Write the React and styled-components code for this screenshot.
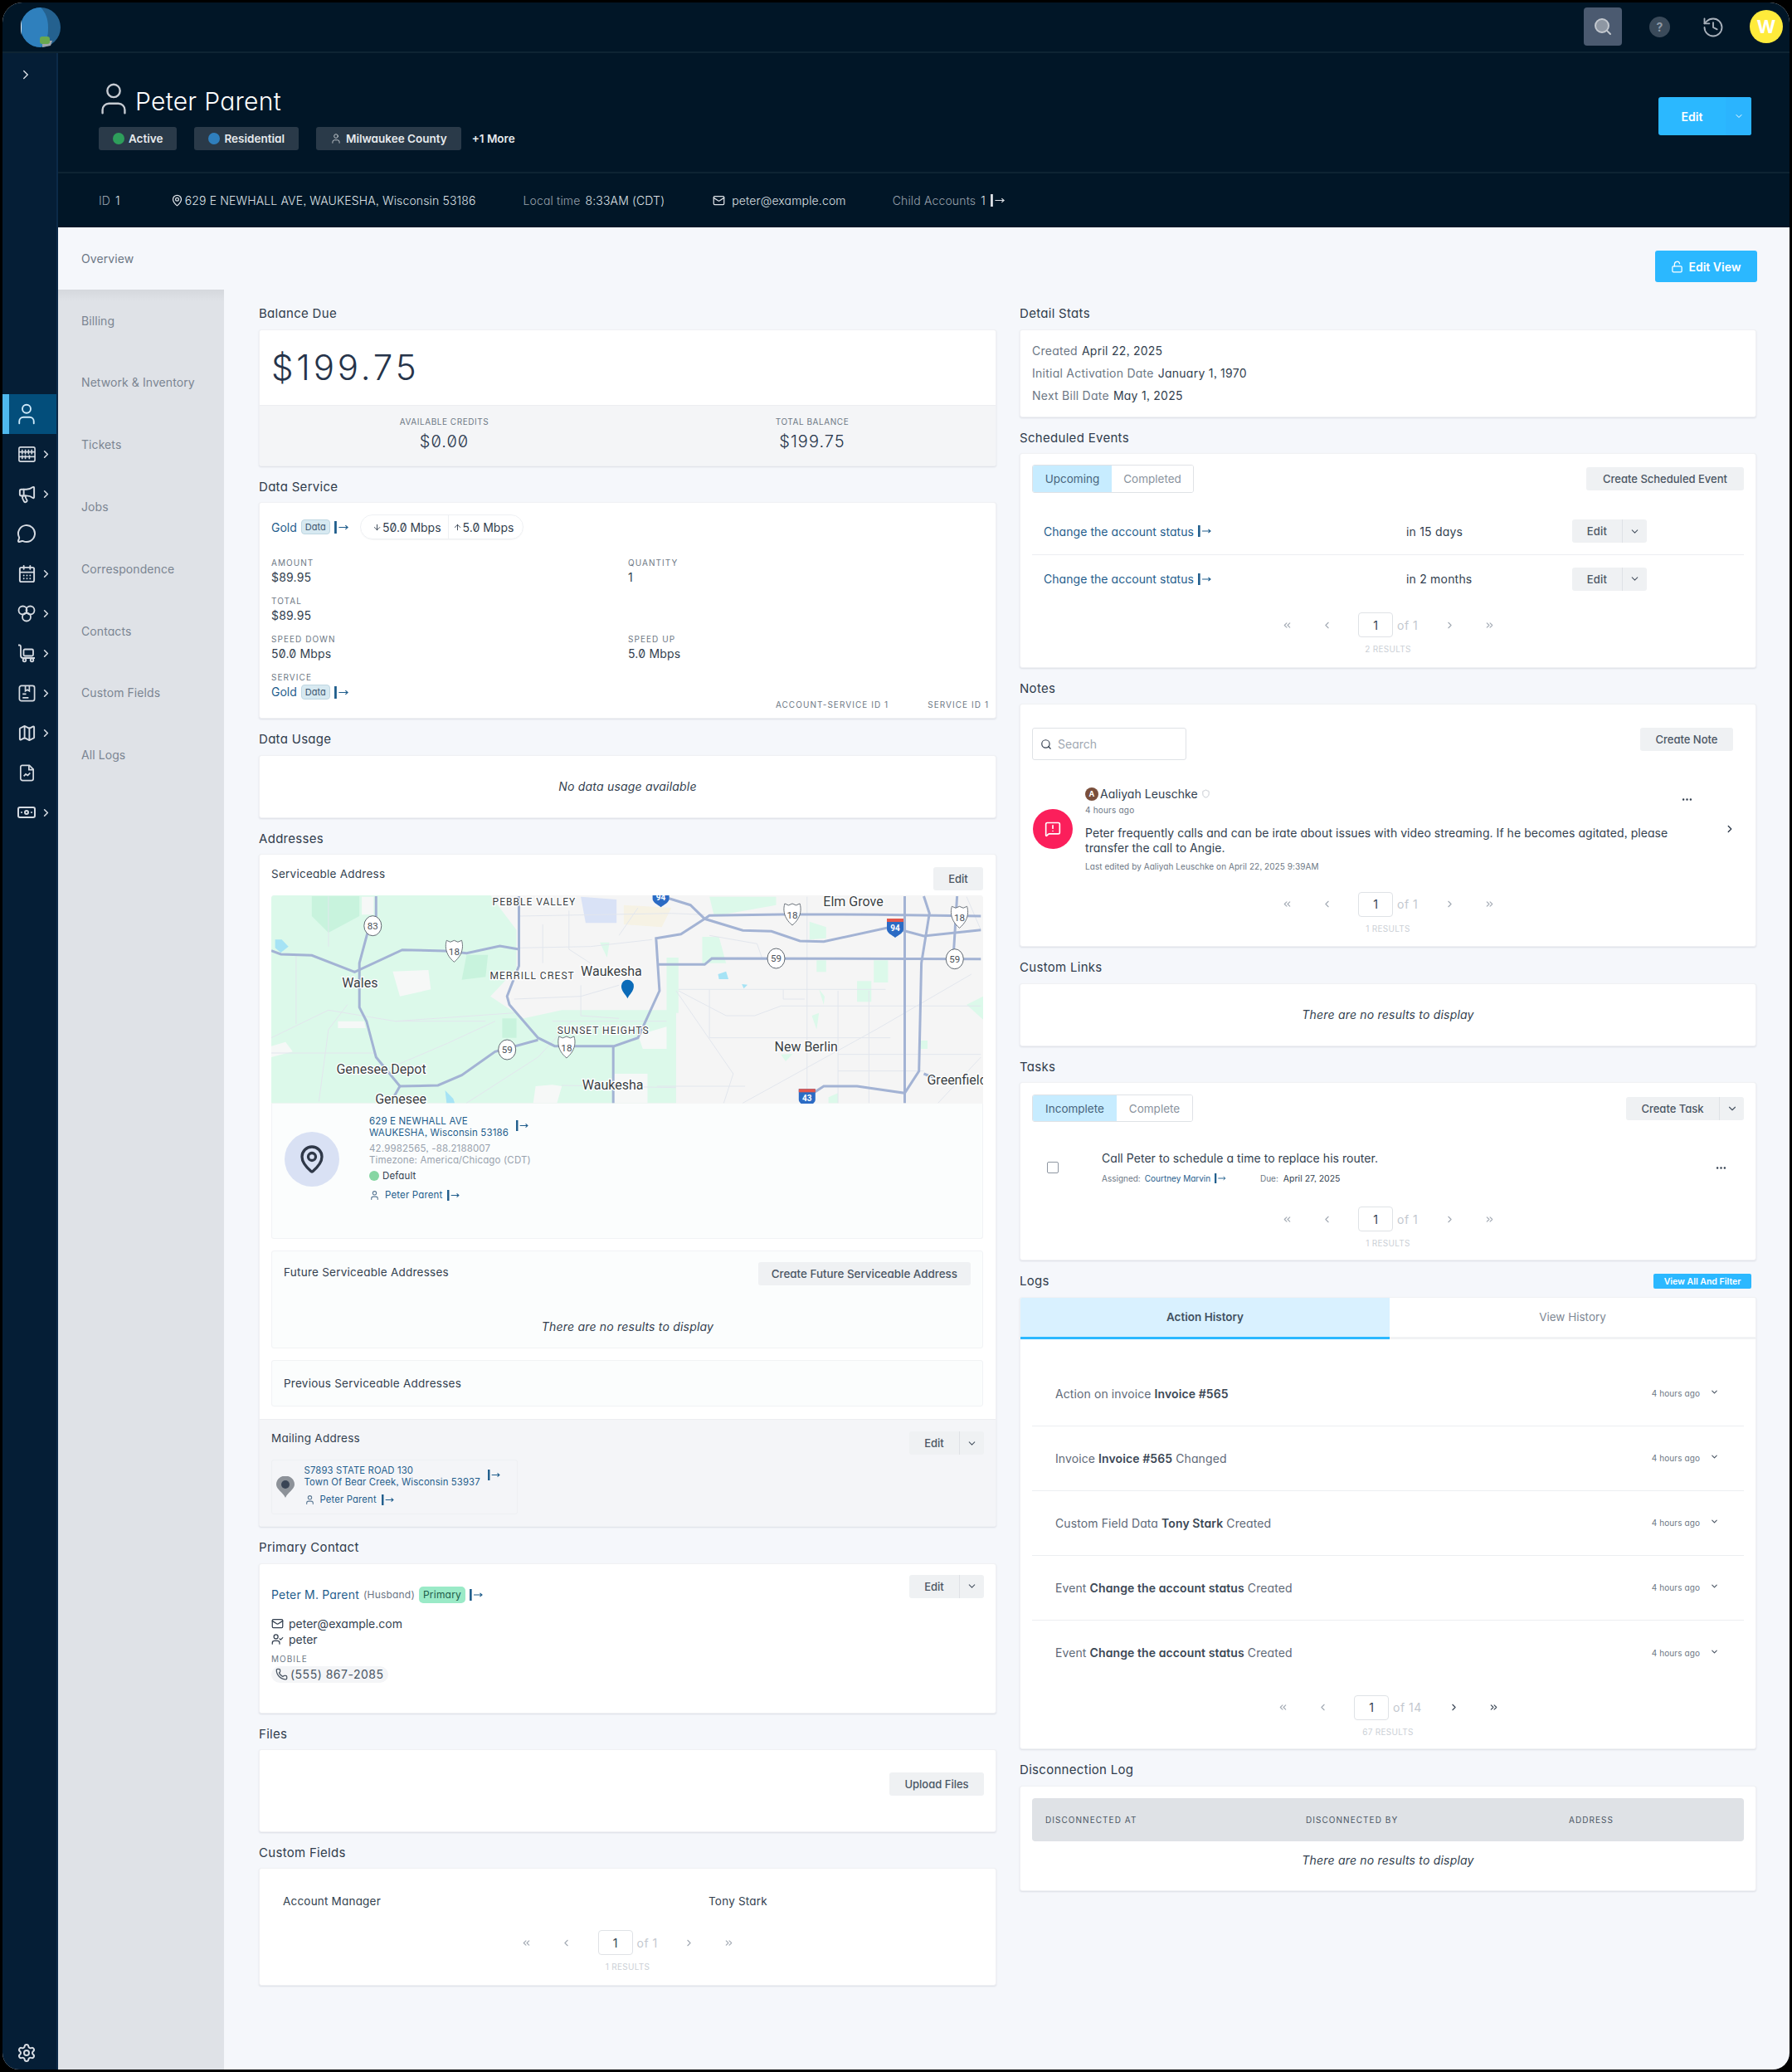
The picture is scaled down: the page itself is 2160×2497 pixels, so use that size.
import React from 'react';
import styled, { createGlobalStyle } from 'styled-components';
import {
  User, Megaphone, MessageCircle, CalendarDays, Map as MapIcon, Banknote, Settings, History, Search,
  LockOpen, MapPin, Mail, ChevronRight, ChevronDown, ChevronLeft, ChevronsLeft, ChevronsRight,
  Ellipsis, UserCheck, Phone, MessageSquareWarning, ArrowDown, ArrowUp, Shield,
} from 'lucide-react';

const GlobalStyle = createGlobalStyle`
  html, body { margin: 0; padding: 0; background: #000; }
  body {
    font-family: Inter, "Liberation Sans", sans-serif;
    font-feature-settings: "cv11", "ss03";
    color: #333f4f;
    font-size: 13px;
  }
  * { box-sizing: border-box; }
`;

const Shell = styled.div`
  width: 2160px;
  height: 2497px;
  padding: 3px;
  background: #000;
`;
const Frame = styled.div`
  height: 100%;
  display: flex;
  flex-direction: column;
  border-radius: 24px 24px 20px 20px;
  overflow: hidden;
  background: #f5f7fb;
`;

/* top bar */
const TopBar = styled.header`
  height: 61px;
  flex: none;
  display: flex;
  align-items: center;
  padding: 0 8px 0 22px;
  background: #011627;
  border-bottom: 2px solid #0e2433;
`;
const TopActions = styled.div`
  margin-left: auto;
  display: flex;
  align-items: center;
`;
const SearchBox = styled.div`
  width: 46px;
  height: 46px;
  margin-top: -2px;
  border-radius: 4px;
  background: #4b5a70;
  color: #c3c8cf;
  display: flex;
  align-items: center;
  justify-content: center;
`;
const HelpDot = styled.div`
  width: 25px;
  height: 25px;
  margin-left: 33px;
  border-radius: 50%;
  background: #3a4a5a;
  color: #8e99a6;
  font-size: 14px;
  font-weight: 700;
  display: flex;
  align-items: center;
  justify-content: center;
`;
const HistoryWrap = styled.div`
  margin-left: 38px;
  color: #a9b1bb;
  display: flex;
`;
const Avatar = styled.div`
  width: 40px;
  height: 40px;
  margin-left: 30px;
  margin-top: -2px;
  border-radius: 50%;
  background: #ffeb3b;
  color: #fff;
  font-size: 22px;
  font-weight: 700;
  display: flex;
  align-items: center;
  justify-content: center;
`;

const Body = styled.div`
  flex: 1;
  display: flex;
  min-height: 0;
`;

/* icon rail */
const Rail = styled.nav`
  width: 67px;
  flex: none;
  display: flex;
  flex-direction: column;
  background: #051e36;
  border-right: 2px solid #0c2a48;
  color: #d5dae1;
`;
const RailToggle = styled.div`
  height: 52px;
  padding-left: 19px;
  display: flex;
  align-items: center;
`;
const RailList = styled.div`
  margin-top: 359px;
  display: flex;
  flex-direction: column;
`;
const RailItem = styled.div`
  height: 48px;
  display: flex;
  align-items: center;
  padding-left: ${p => (p.$active ? '9px' : '17px')};
  background: ${p => (p.$active ? '#034e7b' : 'transparent')};
  border-left: ${p => (p.$active ? '8px solid #4fb8ed' : '0')};
  color: ${p => (p.$active ? '#cfeafa' : 'inherit')};
`;
const RailGlyph = styled.span`
  width: 24px;
  display: flex;
  justify-content: center;
  svg { flex: none; }
`;
const RailCaret = styled.span`
  margin-left: 4px;
  display: flex;
`;
const RailGear = styled.div`
  margin-top: auto;
  padding: 0 0 8px 17px;
`;

const Right = styled.div`
  flex: 1;
  min-width: 0;
  display: flex;
  flex-direction: column;
`;

/* account header */
const AccountHead = styled.div`
  height: 145px;
  flex: none;
  display: flex;
  justify-content: space-between;
  padding: 40px 46px 0 49px;
  background: #011627;
  border-bottom: 2px solid #0e2433;
`;
const NameRow = styled.div`
  height: 36px;
  display: flex;
  align-items: center;
  gap: 2.700px;
  color: #fff;
  font-size: 30px;
  font-weight: 300;
  letter-spacing: .3px;
  svg { color: #c6cbd2; margin: -6px 0 0 -4.700px; flex: none; }
`;
const BadgeRow = styled.div`
  margin-top: 12.500px;
  display: flex;
  align-items: center;
  gap: 21px;
`;
const HeadBadge = styled.div`
  height: 28px;
  padding: 0 17px;
  display: flex;
  align-items: center;
  gap: 5px;
  border-radius: 3px;
  background: #2a3a49;
  color: #e8ebee;
  font-size: 13.500px;
  font-weight: 600;
  svg { margin: 0; }
`;
const Dot = styled.span`
  width: ${p => p.$size || 14}px;
  height: ${p => p.$size || 14}px;
  border-radius: 50%;
  background: ${p => p.$color};
  flex: none;
`;
const MoreTag = styled.span`
  margin-left: -8px;
  color: #e8ebee;
  font-size: 13.500px;
  font-weight: 600;
`;
const PrimarySplit = styled.div`
  display: flex;
  height: 46px;
  margin-top: 13px;
  border-radius: 3px;
  overflow: hidden;
  background: #2bb8ff;
  color: #fff;
  font-size: 14px;
  font-weight: 600;
`;
const PrimaryLabel = styled.div`
  width: 81px;
  display: flex;
  align-items: center;
  justify-content: center;
`;
const PrimaryCaret = styled.div`
  width: 31px;
  background: #2bb4fe;
  display: flex;
  align-items: center;
  justify-content: center;
`;

const InfoStrip = styled.div`
  height: 65px;
  flex: none;
  display: flex;
  align-items: center;
  padding-left: 49px;
  background: #011627;
  color: #dde1e6;
  font-size: 14px;
  font-weight: 300;
  letter-spacing: .15px;
`;
const InfoItem = styled.span`
  display: flex;
  align-items: center;
  gap: ${p => p.$gap || 6}px;
  margin-left: ${p => p.$left || 0}px;
`;
const InfoLabel = styled.span`
  color: #98a2ad;
`;

/* content */
const Content = styled.div`
  flex: 1;
  display: flex;
  min-height: 0;
`;
const SubNav = styled.div`
  width: 200px;
  flex: none;
  background: #dfe2e7;
`;
const SubNavItem = styled.div`
  height: 74.800px;
  padding-left: 28px;
  display: flex;
  align-items: center;
  background: ${p => (p.$active ? '#f5f7fb' : 'transparent')};
  color: ${p => (p.$active ? '#6b7684' : '#7b8592')};
  font-size: 14px;
  letter-spacing: .08px;
  &:nth-child(2) { background: linear-gradient(#d5d8dd, #dfe2e7 14px); }
`;
const Main = styled.main`
  flex: 1;
  min-width: 0;
  padding: 28px 40px 0 42px;
`;
const MainTop = styled.div`
  height: 38px;
  margin: 0 -1px 29px 0;
  display: flex;
  justify-content: flex-end;
`;
const EditViewButton = styled.div`
  width: 123px;
  height: 38px;
  display: flex;
  align-items: center;
  justify-content: center;
  gap: 6px;
  border-radius: 3px;
  background: #2bb8ff;
  color: #fff;
  font-size: 14px;
  font-weight: 600;
`;
const Columns = styled.div`
  display: grid;
  grid-template-columns: 889px 888px;
  gap: 28px;
  align-items: start;
`;
const Column = styled.div`
  display: flex;
  flex-direction: column;
  gap: 16px;
`;
const Section = styled.section``;
const TitleRow = styled.div`
  height: 18px;
  margin-bottom: 9.500px;
  display: flex;
  align-items: center;
  justify-content: space-between;
`;
const Title = styled.h3`
  margin: 0;
  font-size: 15px;
  font-weight: 400;
  line-height: 18px;
  letter-spacing: .3px;
  color: #303c4c;
`;
const Card = styled.div`
  background: #fff;
  border-radius: 3px;
  border: 1px solid #f0f1f4;
  box-shadow: 0 1px 2px rgba(40, 50, 70, .12);
  height: ${p => (p.$h ? `${p.$h}px` : 'auto')};
  padding: ${p => p.$pad || '0'};
  overflow: hidden;
`;
const Empty = styled.div`
  text-align: center;
  font-style: italic;
  font-size: 14px;
  color: #333f4f;
  letter-spacing: .2px;
`;
const CenteredEmpty = styled(Empty)`
  height: 100%;
  display: flex;
  align-items: center;
  justify-content: center;
`;

/* balance */
const BalanceTop = styled.div`
  height: 90px;
  padding-left: 14px;
  display: flex;
  align-items: center;
  font-size: 42px;
  font-weight: 300;
  letter-spacing: 3.800px;
  color: #26344a;
`;
const BalanceFoot = styled.div`
  height: 73px;
  display: grid;
  grid-template-columns: 445px 1fr;
  background: #f4f5f7;
  border-top: 1px solid #eceef1;
`;
const BalanceCell = styled.div`
  text-align: center;
  padding-top: 13px;
`;
const Caps = styled.div`
  margin-top: ${p => p.$top || 0}px;
  font-size: 10px;
  line-height: 12px;
  letter-spacing: ${p => p.$sp || 1.050}px;
  text-transform: uppercase;
  color: ${p => p.$color || '#6d7885'};
`;
const BalanceValue = styled.div`
  margin-top: 5px;
  font-size: 20px;
  line-height: 26px;
  font-weight: 300;
  letter-spacing: 1px;
  color: #26344a;
  font-feature-settings: "cv11", "zero";
`;

/* data service */
const ServiceHead = styled.div`
  height: 30px;
  display: flex;
  align-items: center;
`;
const LinkRow = styled.span`
  display: inline-flex;
  align-items: center;
  gap: ${p => p.$gap || 5}px;
  color: #1f5d8c;
  font-size: ${p => p.$size || 14}px;
  letter-spacing: ${p => p.$sp || 0}px;
`;
const TypeTag = styled.span`
  padding: 0 4px;
  height: 18px;
  display: inline-flex;
  align-items: center;
  border-radius: 4px;
  background: #d7e9f1;
  border: 1px solid #bfd7e2;
  color: #3d566e;
  font-size: 11px;
`;
const SpeedPill = styled.div`
  margin-left: 14px;
  height: 30px;
  display: flex;
  align-items: center;
  border: 1px solid #eef0f3;
  border-radius: 15px;
  box-shadow: 0 1px 1px rgba(0, 0, 0, .04);
  font-size: 14px;
  color: #333f4f;
  font-feature-settings: "cv11", "zero";
`;
const SpeedPart = styled.span`
  height: 100%;
  padding: 0 ${p => (p.$first ? 8 : 11)}px 0 ${p => (p.$first ? 14 : 5)}px;
  display: flex;
  align-items: center;
  gap: 1px;
  border-left: ${p => (p.$first ? '0' : '1px solid #eef0f3')};
`;
const FieldGrid = styled.div`
  margin-top: 22px;
  display: grid;
  grid-template-columns: 430px 1fr;
  grid-auto-rows: 46px;
`;
const Field = styled.div``;
const FieldValue = styled.div`
  margin-top: 3px;
  font-size: 14px;
  line-height: 18px;
  color: #333f4f;
  letter-spacing: .2px;
  font-feature-settings: "cv11", "zero";
`;
const ServiceIds = styled.div`
  align-self: end;
  margin-bottom: 1px;
  padding-right: 8px;
  display: flex;
  justify-content: flex-end;
  gap: 47px;
`;

/* addresses */
const AddressTop = styled.div`
  padding: 15px 15px 15px 14px;
`;
const RowBetween = styled.div`
  display: flex;
  justify-content: space-between;
  align-items: ${p => p.$align || 'center'};
`;
const SubTitle = styled.div`
  font-size: 13.500px;
  line-height: 16px;
  letter-spacing: .25px;
  color: #333f4f;
  padding-top: ${p => p.$top || 0}px;
`;
const GrayButton = styled.div`
  height: 28px;
  width: ${p => (p.$w ? `${p.$w}px` : 'auto')};
  margin-top: ${p => p.$top || 0}px;
  margin-right: ${p => p.$right || 0}px;
  padding: 0 17px;
  flex: none;
  display: inline-flex;
  align-items: center;
  justify-content: center;
  border-radius: 3px;
  background: #eff1f3;
  color: #4b5664;
  font-size: 13px;
  font-weight: 500;
`;
const FutureButton = styled(GrayButton)`
  font-size: 13.400px;
  padding: 0 16px;
  margin-right: 1px;
  margin-top: -1px;
`;
const SplitButton = styled.div`
  height: 28px;
  margin-top: ${p => p.$top || 0}px;
  display: inline-flex;
  flex: none;
  border-radius: 3px;
  background: #eff1f3;
  color: #4b5664;
  font-size: 13px;
  font-weight: 500;
  overflow: hidden;
`;
const SplitLabel = styled.div`
  width: ${p => p.$w}px;
  display: flex;
  align-items: center;
  justify-content: center;
  border-right: 1px solid #dfe2e6;
`;
const SplitCaret = styled.div`
  width: ${p => p.$w || 29}px;
  display: flex;
  align-items: center;
  justify-content: center;
`;
const MapWrap = styled.div`
  margin-top: 6px;
  height: 251px;
  border-radius: 4px 4px 0 0;
  overflow: hidden;
  background: #f5f5f5;
  svg { display: block; }
`;
const AddressBox = styled.div`
  height: 163px;
  padding: 14px 0 0 15px;
  display: flex;
  background: #fbfdfd;
  border: 1px solid #f1f3f5;
  border-top: 0;
  border-radius: 0 0 3px 3px;
`;
const PinCircle = styled.div`
  width: 66px;
  height: 66px;
  margin-top: 20px;
  border-radius: 50%;
  background: #d9e1f4;
  color: #2f3848;
  display: flex;
  align-items: center;
  justify-content: center;
`;
const AddressInfo = styled.div`
  margin-left: 36px;
  font-size: 11.500px;
  line-height: 14px;
  letter-spacing: .15px;
`;
const AddressLines = styled.div`
  display: flex;
  gap: 9px;
  color: #1f5d8c;
`;
const GoOffset = styled.span`
  margin-top: ${p => p.$top ?? 6}px;
  display: flex;
`;
const GreyLines = styled.div`
  margin-top: 5px;
  color: #99a2ad;
`;
const DefaultRow = styled.div`
  margin-top: 5px;
  display: flex;
  align-items: center;
  gap: 4px;
  color: #333f4f;
`;
const OwnerRow = styled.div`
  margin-top: ${p => p.$top || 8}px;
  height: 16px;
  display: flex;
  align-items: center;
  gap: 6px;
  color: #1f5d8c;
  svg.person { color: #5d7a95; }
`;
const InsetBox = styled.div`
  margin-top: ${p => p.$top}px;
  height: ${p => p.$h}px;
  padding: ${p => p.$pad};
  background: #fbfdfd;
  border: 1px solid #f1f3f5;
  border-radius: 3px;
`;
const FutureEmpty = styled(Empty)`
  margin-top: 41px;
  line-height: 18px;
  padding-right: 0;
`;
const AddressBottom = styled.div`
  height: 129px;
  padding: 14px 14px 0 14px;
  background: #f4f5f8;
  border-top: 1px solid #eceef1;
`;
const MailBox = styled.div`
  width: 297px;
  height: 66px;
  margin-top: 6px;
  padding: 5px 0 0 5px;
  display: flex;
  gap: 11.500px;
  border: 1px solid #eef0f3;
  border-radius: 3px;
  font-size: 11.300px;
  line-height: 14px;
  letter-spacing: .15px;
`;
const MailPin = styled.div`
  margin-top: 14px;
  display: flex;
`;

/* contact */
const ContactName = styled.div`
  margin-top: 14px;
  height: 20px;
  display: flex;
  align-items: center;
  gap: 5px;
  font-size: 14px;
  color: #1f5d8c;
  letter-spacing: .2px;
`;
const Relation = styled.span`
  color: #6a7583;
  font-size: 12px;
`;
const PrimaryTag = styled.span`
  height: 20px;
  padding: 0 5px;
  display: inline-flex;
  align-items: center;
  border-radius: 5px;
  background: #9aeac7;
  color: #1d5a49;
  font-size: 12px;
`;
const ContactLine = styled.div`
  height: 19px;
  margin-top: ${p => p.$top || 0}px;
  display: flex;
  align-items: center;
  gap: 6px;
  font-size: 14px;
  color: #333f4f;
`;
const PhonePill = styled.div`
  width: 141px;
  height: 20px;
  margin-top: 3px;
  padding-left: 5px;
  display: flex;
  align-items: center;
  gap: 3px;
  border-radius: 10px;
  background: #f4f5f7;
  font-size: 14px;
  letter-spacing: .5px;
  color: #4b5664;
`;
const ActionEnd = styled.div`
  display: flex;
  justify-content: flex-end;
`;

/* custom field */
const CustomRow = styled.div`
  height: 53.500px;
  padding: 10px 0 0 28px;
  display: grid;
  grid-template-columns: 513px 1fr;
  font-size: 13.500px;
  letter-spacing: .2px;
  color: #333f4f;
`;

/* pagination */
const PagerWrap = styled.div`
  margin-top: ${p => p.$top || 0}px;
  display: flex;
  flex-direction: column;
  align-items: center;
`;
const Pager = styled.div`
  height: 30px;
  display: flex;
  align-items: center;
`;
const PagerArrow = styled.span`
  width: 48px;
  display: flex;
  justify-content: center;
  color: ${p => (p.$on ? '#3a4655' : '#a2a9b3')};
`;
const PagerBox = styled.span`
  width: 42px;
  height: 30px;
  margin-left: 14px;
  display: flex;
  align-items: center;
  justify-content: center;
  border: 1px solid #dfe2e6;
  border-radius: 4px;
  background: #fff;
  font-size: 14px;
  color: #333f4f;
`;
const PagerOf = styled.span`
  width: ${p => p.$w}px;
  padding-left: 5px;
  font-size: 14px;
  color: #c3c8cf;
  letter-spacing: .5px;
`;
const Results = styled.div`
  margin-top: 7px;
  height: 14px;
  line-height: 14px;
  font-size: 10px;
  letter-spacing: .3px;
  color: #cbd0d6;
`;

/* details */
const StatLine = styled.div`
  height: 27px;
  display: flex;
  align-items: center;
  gap: 5px;
  font-size: 14px;
  letter-spacing: .25px;
  color: #333f4f;
`;
const StatLabel = styled.span`
  color: #6d7885;
`;
const Toggle = styled.div`
  display: inline-flex;
  height: ${p => p.$h}px;
  border: 1px solid #dfe2e6;
  border-radius: 3px;
  overflow: hidden;
  font-size: 13.500px;
`;
const ToggleOption = styled.div`
  width: ${p => p.$w}px;
  display: flex;
  align-items: center;
  justify-content: center;
  background: ${p => (p.$on ? '#c7ecff' : '#fff')};
  color: ${p => (p.$on ? '#48647c' : '#8a939e')};
`;
const EventRow = styled.div`
  height: 57px;
  margin-top: ${p => p.$top || 0}px;
  padding-left: 14px;
  display: grid;
  grid-template-columns: 437px 200px 1fr;
  align-items: center;
  font-size: 14px;
  letter-spacing: .2px;
  border-bottom: ${p => (p.$line ? '1.500px solid #eceef1' : '0')};
`;
const SearchField = styled.div`
  width: 186px;
  height: 39px;
  padding-left: 9px;
  display: flex;
  align-items: center;
  gap: 7px;
  border: 1px solid #dfe2e6;
  border-radius: 3px;
  color: #333f4f;
  font-size: 14px;
  span { color: #a0a8b2; }
`;
const Note = styled.div`
  margin-top: 31.500px;
  display: flex;
  align-items: center;
  padding-left: 1px;
`;
const NoteBadge = styled.div`
  width: 48px;
  height: 48px;
  border-radius: 50%;
  flex: none;
  background: #fb1f5b;
  color: #fff;
  display: flex;
  align-items: center;
  justify-content: center;
`;
const NoteBody = styled.div`
  width: 710px;
  margin-left: 15px;
`;
const NoteAuthor = styled.div`
  height: 18px;
  display: flex;
  align-items: center;
  gap: 2px;
  font-size: 14px;
  letter-spacing: .05px;
  svg { color: #c3c8cf; margin-left: 2px; }
`;
const AuthorDot = styled.span`
  width: 16px;
  height: 16px;
  border-radius: 50%;
  background: #7a4f3c;
  color: #fff;
  font-size: 9px;
  font-weight: 700;
  display: flex;
  align-items: center;
  justify-content: center;
`;
const Tiny = styled.div`
  margin-top: ${p => p.$top}px;
  height: 12px;
  line-height: 12px;
  font-size: 10px;
  letter-spacing: ${p => p.$sp ?? .2}px;
  color: #6d7885;
`;
const NoteText = styled.div`
  margin-top: 13px;
  font-size: 14px;
  line-height: 18px;
  letter-spacing: .05px;
  color: #333f4f;
`;
const NoteMenu = styled.div`
  width: 32px;
  margin-left: -1px;
  align-self: flex-start;
  margin-top: 8px;
  display: flex;
  justify-content: center;
  color: #333f4f;
`;
const NoteOpen = styled.div`
  margin-left: 29px;
  display: flex;
  color: #333f4f;
`;
const Task = styled.div`
  margin-top: 35px;
  display: flex;
  align-items: center;
`;
const CheckBox = styled.span`
  width: 14px;
  height: 14px;
  margin-left: 18px;
  border: 1px solid #8e96a1;
  border-radius: 2px;
`;
const TaskBody = styled.div`
  margin-left: 52px;
  flex: 1;
`;
const TaskTitle = styled.div`
  font-size: 14px;
  line-height: 18px;
  letter-spacing: .05px;
`;
const TaskMeta = styled.div`
  margin-top: 8px;
  height: 14px;
  display: flex;
  align-items: center;
  font-size: 10px;
  color: #6d7885;
`;
const MetaLink = styled.span`
  margin-left: 5px;
  display: inline-flex;
  align-items: center;
  gap: 5px;
  color: #1f5d8c;
`;
const MetaDue = styled.span`
  margin-left: 41px;
`;
const MetaDate = styled.span`
  margin-left: 6px;
  color: #333f4f;
  font-size: 10.500px;
`;
const TaskMenu = styled.div`
  margin-right: 20px;
  display: flex;
  color: #333f4f;
`;
const ViewAll = styled.div`
  width: 118px;
  height: 18px;
  margin-right: 6px;
  display: flex;
  align-items: center;
  justify-content: center;
  border-radius: 2px;
  background: #2bb8ff;
  color: #fff;
  font-size: 10.500px;
  font-weight: 600;
`;
const Tabs = styled.div`
  display: grid;
  grid-template-columns: 445px 1fr;
  height: 50px;
`;
const Tab = styled.div`
  display: flex;
  align-items: center;
  justify-content: center;
  font-size: 13.500px;
  background: ${p => (p.$on ? '#d9f1ff' : '#fff')};
  color: ${p => (p.$on ? '#41505f' : '#7e8894')};
  font-weight: ${p => (p.$on ? 600 : 400)};
  border-bottom: 3px solid ${p => (p.$on ? '#2bb8ff' : '#f1f2f4')};
`;
const LogList = styled.div`
  margin: 27px 14px 0 14px;
`;
const LogRow = styled.div`
  height: 78px;
  padding: 0 30px 0 28px;
  display: flex;
  align-items: center;
  font-size: 14px;
  color: #5f6a78;
  letter-spacing: .1px;
  border-bottom: ${p => (p.$line ? '1.500px solid #eceef1' : '0')};
  b { color: #3c4856; font-weight: 600; }
`;
const LogTime = styled.span`
  margin-left: auto;
  font-size: 10px;
  color: #6d7885;
`;
const LogCaret = styled.span`
  margin-left: 12px;
  display: flex;
  color: #4b5664;
  margin-top: -3px;
`;
const TableHead = styled.div`
  height: 52px;
  padding-left: 16px;
  display: grid;
  grid-template-columns: 314px 317px 1fr;
  align-items: center;
  border-radius: 4px;
  background: #dfe2e6;
`;
const TableEmpty = styled(Empty)`
  margin-top: 14px;
  line-height: 18px;
`;

/* go-to arrow, the bar with the thin arrow that sits after every link */
const GoIcon = ({ size = 14 }) => (
  <svg width={size * 1.15} height={size} viewBox="0 0 16 14" fill="none" stroke="currentColor">
    <rect x="0" y="0" width="2.600" height="14" fill="currentColor" stroke="none" />
    <path d="M5 7h10M12.400 4.800 15 7l-2.600 2.200" strokeWidth="1.100" />
  </svg>
);

const AbacusIcon = () => (
  <svg width="23" height="23" viewBox="0 0 24 24" fill="none" stroke="currentColor" strokeWidth="1.700">
    <rect x="2" y="3" width="20" height="18" rx="2" />
    <path d="M2 9h20M2 15h20M6 6v6M10 6v6M14 6v6M18 6v6M6 13v5M10 13v5M15 13v5" />
  </svg>
);
const TrioIcon = () => (
  <svg width="24" height="24" viewBox="0 0 24 24" fill="none" stroke="currentColor" strokeWidth="1.800">
    <circle cx="7.500" cy="8.500" r="5" />
    <circle cx="16.500" cy="8.500" r="5" />
    <circle cx="12" cy="16.500" r="5" />
  </svg>
);
const CartIcon = () => (
  <svg width="24" height="24" viewBox="0 0 24 24" fill="none" stroke="currentColor" strokeWidth="1.800">
    <path d="M2 2.500h1.500Q5 2.500 5 4.500V15q0 3 3 3h14" />
    <rect x="8.500" y="7.500" width="11.500" height="8" rx="1.500" />
    <circle cx="9.500" cy="20.500" r="1.800" />
    <circle cx="18.500" cy="20.500" r="1.800" />
  </svg>
);
const BoxIcon = () => (
  <svg width="23" height="23" viewBox="0 0 24 24" fill="none" stroke="currentColor" strokeWidth="1.800">
    <rect x="2.500" y="2.500" width="19" height="19" rx="2.500" />
    <path d="M10 3v6l2.500-1.500L15 9V3M6.500 13H11M6.500 17.500H14" />
  </svg>
);
const FileChartIcon = () => (
  <svg width="23" height="23" viewBox="0 0 24 24" fill="none" stroke="currentColor" strokeWidth="1.800">
    <path d="M6 2.500h9l5 5V19a2.500 2.500 0 0 1-2.500 2.500h-11A2.500 2.500 0 0 1 4 19V4.500a2 2 0 0 1 2-2z" />
    <path d="M14.500 3v5H20M8 16l2.500-2.500 2.500 1.500 3-3" />
  </svg>
);
const Logo = () => (
  <svg width="48" height="48" viewBox="0 0 48 48">
    <circle cx="24" cy="24" r="24" fill="#24618f" />
    <path d="M24 0a24 24 0 0 0 -24 24 24 24 0 0 0 24 24c8-6 9-14 9-24S30 6 24 0z" fill="#2f80bd" />
    <path d="M26 40h12l-2 6-10 2z" fill="#9fa5aa" />
    <rect x="23" y="35" width="12" height="9" rx="3" fill="#69a84f" />
    <path d="M0 24c0-4 .5-7 1-9v18c-.5-2-1-5-1-9z" fill="#e8f0f6" />
  </svg>
);

/* map drawing, coordinates measured from the reference crop */
const mx = x => +((x - 30) / 1.742).toFixed(1);
const my = y => +((y - 55) / 3).toFixed(1);
const toPoints = pts => pts.map(([x, y]) => `${mx(x)},${my(y)}`).join(' ');

const GREEN = [
  [[30, 55], [490, 55], [545, 180], [545, 320], [490, 420], [560, 500], [640, 470], [880, 470], [880, 806], [30, 806]],
  [[950, 60], [1090, 60], [1090, 90], [960, 130]],
  [[860, 280], [885, 280], [885, 480], [860, 480]],
  [[935, 205], [970, 205], [985, 300], [935, 300]],
  [[1160, 150], [1195, 170], [1195, 210], [1160, 215]],
  [[1175, 290], [1195, 290], [1195, 332], [1175, 332]],
  [[1295, 290], [1325, 290], [1325, 370], [1295, 370]],
  [[1260, 365], [1290, 365], [1290, 440], [1260, 440]],
  [[1165, 490], [1180, 480], [1175, 540]],
  [[1180, 395], [1192, 420], [1190, 450]],
  [[1390, 580], [1408, 580], [1408, 610], [1390, 610]],
  [[1100, 630], [1125, 628], [1110, 655]],
  [[1200, 785], [1220, 770], [1220, 806], [1200, 806]],
  [[720, 225], [740, 225], [735, 280]],
  [[1490, 450], [1525, 420], [1525, 505]],
];
const DEEP = [
  [[115, 58], [215, 58], [215, 130], [150, 190], [115, 130]],
  [[440, 270], [485, 270], [480, 350], [430, 360]],
  [[515, 500], [545, 500], [545, 570], [515, 570]],
];
const PALE = [
  [[220, 60], [245, 60], [245, 125], [220, 125]],
  [[285, 330], [360, 325], [365, 395], [300, 420]],
  [[170, 510], [225, 510], [228, 535], [170, 535]],
  [[800, 560], [860, 530], [860, 610], [810, 610]],
  [[620, 740], [640, 745], [630, 806], [580, 806], [585, 745]],
  [[750, 700], [820, 700], [820, 806], [750, 806]],
  [[30, 600], [60, 585], [75, 620], [30, 640]],
];
const WATER = [
  [[38, 215], [52, 215], [66, 240], [50, 262], [38, 245]],
  [[968, 340], [985, 330], [990, 358], [970, 358]],
  [[1018, 376], [1030, 378], [1022, 392]],
  [[395, 760], [412, 790], [415, 806], [398, 806]],
];
const STREETS = [
  [[150, 58], [150, 240]], [[82, 270], [82, 520]], [[30, 570], [150, 470], [290, 510], [540, 480]],
  [[30, 625], [250, 625]], [[290, 510], [480, 510]], [[190, 450], [150, 540], [130, 800]],
  [[250, 700], [400, 590], [500, 510]], [[440, 806], [590, 640], [660, 510]],
  [[655, 110], [655, 250], [700, 300]], [[600, 160], [600, 300]], [[550, 130], [870, 120], [940, 125]],
  [[550, 245], [700, 240], [830, 215]], [[885, 395], [1320, 395]], [[885, 400], [985, 490], [1045, 490], [1100, 455], [1520, 455]],
  [[950, 395], [950, 570], [1330, 570]], [[1105, 395], [1105, 430], [1150, 430]], [[1155, 60], [1155, 806]],
  [[1220, 400], [1220, 806]], [[1285, 400], [1285, 806]], [[1220, 630], [1520, 630]], [[1220, 690], [1400, 690]],
  [[1020, 806], [1300, 540], [1500, 340]], [[880, 400], [1000, 700], [980, 806]], [[540, 430], [680, 420], [760, 380]],
  [[680, 380], [680, 490], [760, 500]], [[620, 510], [860, 510]], [[840, 745], [1025, 745]], [[640, 742], [880, 750]],
  [[1430, 806], [1520, 640]], [[1490, 60], [1520, 180]], [[950, 200], [1050, 230], [1060, 280]], [[760, 200], [800, 100]],
];
const ROADS = [
  [[30, 255], [50, 268], [115, 272], [205, 332], [305, 252], [395, 256], [440, 264], [510, 238], [550, 250]],
  [[250, 58], [250, 130], [232, 190], [215, 300], [215, 460], [230, 510], [250, 640], [300, 745]],
  [[300, 745], [380, 742], [430, 705], [500, 620], [590, 578]],
  [[280, 806], [300, 745]],
  [[550, 58], [550, 310], [525, 420], [530, 450], [590, 570], [625, 600], [750, 600], [800, 570], [845, 400], [838, 210], [890, 195], [940, 140], [950, 128], [1100, 124], [1200, 124], [1300, 125], [1520, 130]],
  [[850, 58], [910, 90], [940, 140], [1020, 182], [1080, 185], [1140, 220], [1190, 222], [1330, 170], [1400, 202], [1520, 180]],
  [[840, 305], [940, 305], [955, 283], [1520, 285]],
  [[1360, 58], [1360, 806]],
  [[1400, 58], [1412, 120], [1395, 300], [1390, 690], [1360, 770], [1260, 745], [1190, 745], [1150, 790]],
  [[748, 600], [748, 806]],
  [[1470, 58], [1462, 285]],
  [[1400, 700], [1430, 720]],
];
const US_SHIELDS = [['18', 414, 257], ['18', 1124, 124], ['18', 650, 604], ['18', 1475, 134]];
const STATE_SHIELDS = [['83', 243, 165], ['59', 525, 613], ['59', 1090, 283], ['59', 1465, 285]];
const LABELS = [
  ['PEBBLE VALLEY', 582, 92, 12, 1], ['Waukesha', 744, 346, 16, 0], ['Elm Grove', 1252, 95, 16, 0],
  ['Wales', 216, 387, 16, 0], ['MERRILL CREST', 578, 358, 12, 1], ['SUNSET HEIGHTS', 727, 557, 12, 1],
  ['New Berlin', 1153, 620, 16, 0], ['Genesee Depot', 261, 699, 16, 0], ['Waukesha', 747, 756, 16, 0],
  ['Genesee', 302, 807, 16, 0], ['Greenfield', 1470, 740, 16, 0],
];

const ServiceMap = () => (
  <svg width="858" height="251" viewBox="0 0 858 251">
    <rect width="858" height="251" fill="#f5f5f5" />
    <polygon points={toPoints([[680, 60], [755, 70], [755, 155], [690, 155]])} fill="#d9e2f6" />
    <polygon points={toPoints([[770, 90], [870, 100], [850, 170], [770, 160]])} fill="#f6f2e4" />
    {GREEN.map((p, i) => <polygon key={i} points={toPoints(p)} fill="#dcf9ea" />)}
    {DEEP.map((p, i) => <polygon key={i} points={toPoints(p)} fill="#c8f3dd" />)}
    {PALE.map((p, i) => <polygon key={i} points={toPoints(p)} fill="#f6f8f7" />)}
    {WATER.map((p, i) => <polygon key={i} points={toPoints(p)} fill="#a6e3f5" />)}
    {STREETS.map((p, i) => <polyline key={i} points={toPoints(p)} fill="none" stroke="#e2e6ed" strokeWidth="1" />)}
    {ROADS.map((p, i) => <polyline key={i} points={toPoints(p)} fill="none" stroke="#a3b3d4" strokeWidth="3" />)}
    {US_SHIELDS.map(([n, x, y], i) => (
      <g key={i} transform={`translate(${mx(x)} ${my(y)}) scale(1.300)`}>
        <path d="M-7-10l3.500 1.500L0-10l3.500 1.500L7-10c1.500 5 1.500 13-7 20-8.500-7-8.500-15-7-20z" fill="#fff" stroke="#5f6770" strokeWidth=".7" />
        <text y="3.500" textAnchor="middle" fontSize="9" fill="#4a5058" fontFamily="Roboto, sans-serif">{n}</text>
      </g>
    ))}
    {STATE_SHIELDS.map(([n, x, y], i) => (
      <g key={i} transform={`translate(${mx(x)} ${my(y)})`}>
        <ellipse rx="10.500" ry="12" fill="#fff" stroke="#5f6770" strokeWidth="1" />
        <text y="4.200" textAnchor="middle" fontSize="11.500" fill="#4a5058" fontFamily="Roboto, sans-serif">{n}</text>
      </g>
    ))}
    {[['94', 1340, 172], ['94', 848, 62], ['43', 1155, 788]].map(([n, x, y], i) => (
      <g key={i} transform={`translate(${mx(x)} ${my(y)})`}>
        <path d="M-10-11H10V2C10 6 4 9 0 12-4 9-10 6-10 2z" fill="#2b6bc4" />
        <path d="M-10-11H10V-7H-10z" fill="#e2574c" />
        <text y="4" textAnchor="middle" fontSize="10" fontWeight="700" fill="#fff" fontFamily="Roboto, sans-serif">{n}</text>
      </g>
    ))}
    {LABELS.map(([t, x, y, s, sp], i) => (
      <text key={i} x={mx(x)} y={my(y)} textAnchor="middle" fontSize={s} letterSpacing={sp} fill="#3a3f44"
        fontFamily="Roboto, sans-serif" stroke="#fff" strokeWidth="2.500" paintOrder="stroke">{t}</text>
    ))}
    <path transform={`translate(${mx(778)} ${my(395)})`} d="M0 11C-2 6-7.500 3-7.500-4a7.500 7.500 0 0 1 15 0C7.500 3 2 6 0 11z" fill="#0b6bb8" />
  </svg>
);

const Pagination = ({ of = 'of 1', ofWidth = 44, results, top, active }) => (
  <PagerWrap $top={top}>
    <Pager>
      <PagerArrow><ChevronsLeft size={13} /></PagerArrow>
      <PagerArrow><ChevronLeft size={13} /></PagerArrow>
      <PagerBox>1</PagerBox>
      <PagerOf $w={ofWidth}>{of}</PagerOf>
      <PagerArrow $on={active}><ChevronRight size={13} /></PagerArrow>
      <PagerArrow $on={active}><ChevronsRight size={13} /></PagerArrow>
    </Pager>
    <Results>{results}</Results>
  </PagerWrap>
);

const EditSplit = () => (
  <SplitButton>
    <SplitLabel $w={61}>Edit</SplitLabel>
    <SplitCaret><ChevronDown size={13} /></SplitCaret>
  </SplitButton>
);

const GoldLink = () => (
  <LinkRow>
    Gold <TypeTag>Data</TypeTag> <GoIcon size={15} />
  </LinkRow>
);

const railIcons = [
  { icon: <User size={30} strokeWidth={1.5} />, active: true },
  { icon: <AbacusIcon />, caret: true },
  { icon: <Megaphone size={23} />, caret: true },
  { icon: <MessageCircle size={24} /> },
  { icon: <CalendarDays size={23} />, caret: true },
  { icon: <TrioIcon />, caret: true },
  { icon: <CartIcon />, caret: true },
  { icon: <BoxIcon />, caret: true },
  { icon: <MapIcon size={23} />, caret: true },
  { icon: <FileChartIcon /> },
  { icon: <Banknote size={24} />, caret: true },
];

const subNav = ['Overview', 'Billing', 'Network & Inventory', 'Tickets', 'Jobs', 'Correspondence', 'Contacts', 'Custom Fields', 'All Logs'];

const logs = [
  <>Action on invoice <b>Invoice #565</b></>,
  <>Invoice <b>Invoice #565</b> Changed</>,
  <>Custom Field Data <b>Tony Stark</b> Created</>,
  <>Event <b>Change the account status</b> Created</>,
  <>Event <b>Change the account status</b> Created</>,
];

export default function App() {
  return (
    <Shell>
      <GlobalStyle />
      <Frame>
        <TopBar>
          <Logo />
          <TopActions>
            <SearchBox><Search size={24} fill="#8e97a3" /></SearchBox>
            <HelpDot>?</HelpDot>
            <HistoryWrap><History size={28} strokeWidth={1.6} /></HistoryWrap>
            <Avatar>W</Avatar>
          </TopActions>
        </TopBar>
        <Body>
          <Rail>
            <RailToggle><ChevronRight size={18} /></RailToggle>
            <RailList>
              {railIcons.map((item, i) => (
                <RailItem key={i} $active={item.active}>
                  <RailGlyph>{item.icon}</RailGlyph>
                  {item.caret && <RailCaret><ChevronRight size={15} strokeWidth={2.6} /></RailCaret>}
                </RailItem>
              ))}
            </RailList>
            <RailGear><RailGlyph><Settings size={24} /></RailGlyph></RailGear>
          </Rail>
          <Right>
            <AccountHead>
              <div>
                <NameRow><User size={46} strokeWidth={1.25} />Peter Parent</NameRow>
                <BadgeRow>
                  <HeadBadge><Dot $color="#2e9e5b" />Active</HeadBadge>
                  <HeadBadge><Dot $color="#2f7fbd" />Residential</HeadBadge>
                  <HeadBadge><User size={14} strokeWidth={1.3} />Milwaukee County</HeadBadge>
                  <MoreTag>+1 More</MoreTag>
                </BadgeRow>
              </div>
              <PrimarySplit>
                <PrimaryLabel>Edit</PrimaryLabel>
                <PrimaryCaret><ChevronDown size={12} /></PrimaryCaret>
              </PrimarySplit>
            </AccountHead>
            <InfoStrip>
              <InfoItem><InfoLabel>ID</InfoLabel> 1</InfoItem>
              <InfoItem $left={61} $gap={2}><MapPin size={15} />629 E NEWHALL AVE, WAUKESHA, Wisconsin 53186</InfoItem>
              <InfoItem $left={57}><InfoLabel>Local time</InfoLabel> 8:33AM (CDT)</InfoItem>
              <InfoItem $left={58} $gap={8}><Mail size={15} />peter@example.com</InfoItem>
              <InfoItem $left={56}><InfoLabel>Child Accounts</InfoLabel> 1 <GoIcon size={15} /></InfoItem>
            </InfoStrip>
            <Content>
              <SubNav>
                {subNav.map((t, i) => <SubNavItem key={t} $active={i === 0}>{t}</SubNavItem>)}
              </SubNav>
              <Main>
                <MainTop>
                  <EditViewButton><LockOpen size={15} />Edit View</EditViewButton>
                </MainTop>
                <Columns>
                  <Column>
                    <Section>
                      <TitleRow><Title>Balance Due</Title></TitleRow>
                      <Card>
                        <BalanceTop>$199.75</BalanceTop>
                        <BalanceFoot>
                          <BalanceCell><Caps $sp={.55}>Available Credits</Caps><BalanceValue>$0.00</BalanceValue></BalanceCell>
                          <BalanceCell><Caps $sp={.55}>Total Balance</Caps><BalanceValue>$199.75</BalanceValue></BalanceCell>
                        </BalanceFoot>
                      </Card>
                    </Section>
                    <Section>
                      <TitleRow><Title>Data Service</Title></TitleRow>
                      <Card $h={261} $pad="14px 0 0 14px">
                        <ServiceHead>
                          <GoldLink />
                          <SpeedPill>
                            <SpeedPart $first><ArrowDown size={11} />50.0 Mbps</SpeedPart>
                            <SpeedPart><ArrowUp size={11} />5.0 Mbps</SpeedPart>
                          </SpeedPill>
                        </ServiceHead>
                        <FieldGrid>
                          <Field><Caps>Amount</Caps><FieldValue>$89.95</FieldValue></Field>
                          <Field><Caps>Quantity</Caps><FieldValue>1</FieldValue></Field>
                          <Field><Caps>Total</Caps><FieldValue>$89.95</FieldValue></Field>
                          <Field />
                          <Field><Caps>Speed Down</Caps><FieldValue>50.0 Mbps</FieldValue></Field>
                          <Field><Caps>Speed Up</Caps><FieldValue>5.0 Mbps</FieldValue></Field>
                          <Field><Caps>Service</Caps><FieldValue><GoldLink /></FieldValue></Field>
                          <ServiceIds>
                            <Caps>Account-Service ID 1</Caps>
                            <Caps>Service ID 1</Caps>
                          </ServiceIds>
                        </FieldGrid>
                      </Card>
                    </Section>
                    <Section>
                      <TitleRow><Title>Data Usage</Title></TitleRow>
                      <Card $h={76}><CenteredEmpty>No data usage available</CenteredEmpty></Card>
                    </Section>
                    <Section>
                      <TitleRow><Title>Addresses</Title></TitleRow>
                      <Card>
                        <AddressTop>
                          <RowBetween $align="flex-start">
                            <SubTitle>Serviceable Address</SubTitle>
                            <GrayButton $w={60}>Edit</GrayButton>
                          </RowBetween>
                          <MapWrap><ServiceMap /></MapWrap>
                          <AddressBox>
                            <PinCircle><MapPin size={36} strokeWidth={2.2} /></PinCircle>
                            <AddressInfo>
                              <AddressLines>
                                <div>629 E NEWHALL AVE<br />WAUKESHA, Wisconsin 53186</div>
                                <GoOffset><GoIcon size={13} /></GoOffset>
                              </AddressLines>
                              <GreyLines>42.9982565, -88.2188007<br />Timezone: America/Chicago (CDT)</GreyLines>
                              <DefaultRow><Dot $color="#86d6a3" $size={12} />Default</DefaultRow>
                              <OwnerRow><User className="person" size={13} />Peter Parent <GoIcon size={13} /></OwnerRow>
                            </AddressInfo>
                          </AddressBox>
                          <InsetBox $top={14} $h={118} $pad="14px 13px 0 14px">
                            <RowBetween $align="flex-start">
                              <SubTitle $top={3}>Future Serviceable Addresses</SubTitle>
                              <FutureButton>Create Future Serviceable Address</FutureButton>
                            </RowBetween>
                            <FutureEmpty>There are no results to display</FutureEmpty>
                          </InsetBox>
                          <InsetBox $top={14} $h={56} $pad="19px 0 0 14px">
                            <SubTitle>Previous Serviceable Addresses</SubTitle>
                          </InsetBox>
                        </AddressTop>
                        <AddressBottom>
                          <RowBetween $align="flex-start">
                            <SubTitle>Mailing Address</SubTitle>
                            <EditSplit />
                          </RowBetween>
                          <MailBox>
                            <MailPin>
                              <svg width="22" height="26" viewBox="0 0 22 26">
                                <path d="M11 26C8 19 0 16 0 10a11 10.500 0 0 1 22 0c0 6-8 9-11 16z" fill="#8d9299" />
                                <circle cx="11" cy="10" r="5" fill="#3a4556" />
                              </svg>
                            </MailPin>
                            <div>
                              <AddressLines>
                                <div>S7893 STATE ROAD 130<br />Town Of Bear Creek, Wisconsin 53937</div>
                                <GoOffset><GoIcon size={13} /></GoOffset>
                              </AddressLines>
                              <OwnerRow $top={6}><User className="person" size={13} />Peter Parent <GoIcon size={13} /></OwnerRow>
                            </div>
                          </MailBox>
                        </AddressBottom>
                      </Card>
                    </Section>
                    <Section>
                      <TitleRow><Title>Primary Contact</Title></TitleRow>
                      <Card $h={181} $pad="13px 14px 0 14px">
                        <RowBetween $align="flex-start">
                          <div>
                            <ContactName>
                              Peter M. Parent <Relation>(Husband)</Relation> <PrimaryTag>Primary</PrimaryTag>
                              <GoOffset $top={0}><GoIcon size={14} /></GoOffset>
                            </ContactName>
                            <ContactLine $top={15}><Mail size={15} />peter@example.com</ContactLine>
                            <ContactLine><UserCheck size={15} />peter</ContactLine>
                            <Caps $top={8}>Mobile</Caps>
                            <PhonePill><Phone size={15} />(555) 867-2085</PhonePill>
                          </div>
                          <EditSplit />
                        </RowBetween>
                      </Card>
                    </Section>
                    <Section>
                      <TitleRow><Title>Files</Title></TitleRow>
                      <Card $h={99.5} $pad="27px 14px 0 0">
                        <ActionEnd><GrayButton $w={114}>Upload Files</GrayButton></ActionEnd>
                      </Card>
                    </Section>
                    <Section>
                      <TitleRow><Title>Custom Fields</Title></TitleRow>
                      <Card $h={142} $pad="20.5px 0 0 0">
                        <CustomRow><span>Account Manager</span><span>Tony Stark</span></CustomRow>
                        <Pagination top={0} results="1 RESULTS" />
                      </Card>
                    </Section>
                  </Column>
                  <Column>
                    <Section>
                      <TitleRow><Title>Detail Stats</Title></TitleRow>
                      <Card $h={106} $pad="11px 0 0 14px">
                        <StatLine><StatLabel>Created</StatLabel> April 22, 2025</StatLine>
                        <StatLine><StatLabel>Initial Activation Date</StatLabel> January 1, 1970</StatLine>
                        <StatLine><StatLabel>Next Bill Date</StatLabel> May 1, 2025</StatLine>
                      </Card>
                    </Section>
                    <Section>
                      <TitleRow><Title>Scheduled Events</Title></TitleRow>
                      <Card $h={258.5} $pad="13px 14px 0 14px">
                        <RowBetween $align="flex-start">
                          <Toggle $h={34}>
                            <ToggleOption $on $w={95}>Upcoming</ToggleOption>
                            <ToggleOption $w={98}>Completed</ToggleOption>
                          </Toggle>
                          <GrayButton $w={190} $top={3}>Create Scheduled Event</GrayButton>
                        </RowBetween>
                        <EventRow $line $top={18}>
                          <LinkRow $sp={.05}>Change the account status <GoIcon size={14} /></LinkRow>
                          <span>in 15 days</span>
                          <div><EditSplit /></div>
                        </EventRow>
                        <EventRow>
                          <LinkRow $sp={.05}>Change the account status <GoIcon size={14} /></LinkRow>
                          <span>in 2 months</span>
                          <div><EditSplit /></div>
                        </EventRow>
                        <Pagination top={12} results="2 RESULTS" />
                      </Card>
                    </Section>
                    <Section>
                      <TitleRow><Title>Notes</Title></TitleRow>
                      <Card $h={293} $pad="28px 14px 0 14px">
                        <RowBetween $align="flex-start">
                          <SearchField><Search size={14} /><span>Search</span></SearchField>
                          <GrayButton $w={112} $right={13}>Create Note</GrayButton>
                        </RowBetween>
                        <Note>
                          <NoteBadge><MessageSquareWarning size={20} /></NoteBadge>
                          <NoteBody>
                            <NoteAuthor><AuthorDot>A</AuthorDot>Aaliyah Leuschke<Shield size={11} /></NoteAuthor>
                            <Tiny $top={4}>4 hours ago</Tiny>
                            <NoteText>
                              Peter frequently calls and can be irate about issues with video streaming. If he becomes agitated, please<br />
                              transfer the call to Angie.
                            </NoteText>
                            <Tiny $top={7} $sp={.06}>Last edited by Aaliyah Leuschke on April 22, 2025 9:39AM</Tiny>
                          </NoteBody>
                          <NoteMenu><Ellipsis size={15} /></NoteMenu>
                          <NoteOpen><ChevronRight size={14} strokeWidth={2.4} /></NoteOpen>
                        </Note>
                        <Pagination top={25} results="1 RESULTS" />
                      </Card>
                    </Section>
                    <Section>
                      <TitleRow><Title>Custom Links</Title></TitleRow>
                      <Card $h={76}><CenteredEmpty>There are no results to display</CenteredEmpty></Card>
                    </Section>
                    <Section>
                      <TitleRow><Title>Tasks</Title></TitleRow>
                      <Card $h={215} $pad="14px 14px 0 14px">
                        <RowBetween $align="flex-start">
                          <Toggle $h={33}>
                            <ToggleOption $on $w={101}>Incomplete</ToggleOption>
                            <ToggleOption $w={91}>Complete</ToggleOption>
                          </Toggle>
                          <SplitButton $top={3}>
                            <SplitLabel $w={113}>Create Task</SplitLabel>
                            <SplitCaret><ChevronDown size={14} /></SplitCaret>
                          </SplitButton>
                        </RowBetween>
                        <Task>
                          <CheckBox />
                          <TaskBody>
                            <TaskTitle>Call Peter to schedule a time to replace his router.</TaskTitle>
                            <TaskMeta>
                              Assigned:
                              <MetaLink>Courtney Marvin <GoIcon size={12} /></MetaLink>
                              <MetaDue>Due:</MetaDue>
                              <MetaDate>April 27, 2025</MetaDate>
                            </TaskMeta>
                          </TaskBody>
                          <TaskMenu><Ellipsis size={15} /></TaskMenu>
                        </Task>
                        <Pagination top={27} results="1 RESULTS" />
                      </Card>
                    </Section>
                    <Section>
                      <TitleRow>
                        <Title>Logs</Title>
                        <ViewAll>View All And Filter</ViewAll>
                      </TitleRow>
                      <Card $h={545.5}>
                        <Tabs>
                          <Tab $on>Action History</Tab>
                          <Tab>View History</Tab>
                        </Tabs>
                        <LogList>
                          {logs.map((text, i) => (
                            <LogRow key={i} $line={i < logs.length - 1}>
                              <span>{text}</span>
                              <LogTime>4 hours ago</LogTime>
                              <LogCaret><ChevronDown size={11} strokeWidth={2.4} /></LogCaret>
                            </LogRow>
                          ))}
                        </LogList>
                        <Pagination top={12} of="of 14" ofWidth={54} results="67 RESULTS" active />
                      </Card>
                    </Section>
                    <Section>
                      <TitleRow><Title>Disconnection Log</Title></TitleRow>
                      <Card $h={127} $pad="14px 14px 0 14px">
                        <TableHead>
                          <Caps $color="#4b5664">Disconnected At</Caps>
                          <Caps $color="#4b5664">Disconnected By</Caps>
                          <Caps $color="#4b5664">Address</Caps>
                        </TableHead>
                        <TableEmpty>There are no results to display</TableEmpty>
                      </Card>
                    </Section>
                  </Column>
                </Columns>
              </Main>
            </Content>
          </Right>
        </Body>
      </Frame>
    </Shell>
  );
}
